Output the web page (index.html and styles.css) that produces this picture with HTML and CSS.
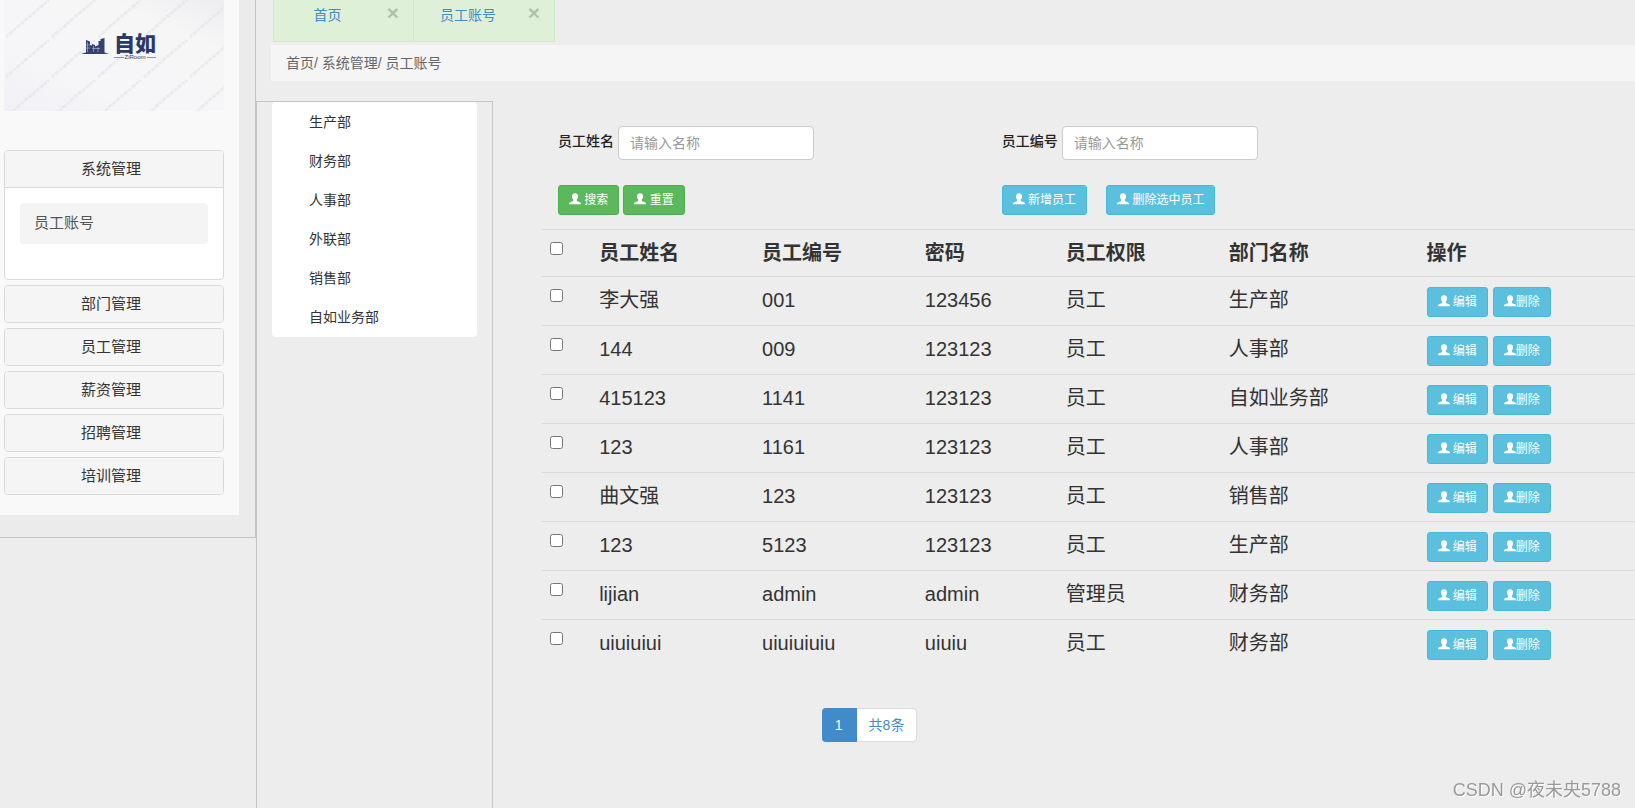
FILE: index.html
```html
<!DOCTYPE html>
<html lang="zh-CN">
<head>
<meta charset="utf-8">
<meta name="viewport" content="width=device-width, initial-scale=1">
<title>员工账号</title>
<link rel="stylesheet" href="styles.css">
</head>
<body>
<svg width="0" height="0" class="sprite" aria-hidden="true">
  <symbol id="user" viewBox="0 0 12 12"><path fill="currentColor" d="M6 .3c2 0 3 1.200 3 3.100 0 1.300-.5 2.400-1.200 3v1c.1.600.4.800 1 1l2.100.9c.8.4 1.100.9 1.100 2H0c0-1.100.3-1.600 1.100-2l2.100-.9c.6-.200.9-.400 1-1v-1C3.500 5.800 3 4.700 3 3.400 3 1.500 4 .3 6 .3Z"/></symbol>
</svg>
<div class="layout">
  <aside class="sidebar">
    <div class="side-panel">
      <div class="brand">
        <svg class="brand-bg" aria-hidden="true">
          <defs><pattern id="hatch" width="46" height="40" patternUnits="userSpaceOnUse">
            <path d="M2 37 26 16M25 17 45 0" stroke="#e2e2e5" stroke-width="3" stroke-dasharray="3 1 5 1" opacity=".55"/>
          </pattern></defs>
          <rect width="100%" height="100%" fill="url(#hatch)"/>
        </svg>
        <svg class="skyline" viewBox="0 0 28 18" aria-hidden="true">
          <path fill="#34406f" d="M0 16.500 5 15.500V3l4 1.500V8l2 .5V7l3 1v1.500l3.500-1.500V4h2V2l4-1v14.500l4.500 1-4.500.5H4Z"/>
          <path stroke="#b9bfd6" stroke-width=".6" d="M6.500 5v10M12.500 9v6M17 10v5M5 8h4M5 11h4M11 11.500h8"/>
        </svg>
        <div class="brand-name"><span class="brand-cn">自如</span><span class="brand-en">ZiRoom</span></div>
      </div>
      <nav class="menu">
        <section class="group">
          <button class="group-head" type="button">系统管理</button>
          <div class="group-body"><a class="group-link" href="#">员工账号</a></div>
        </section>
        <section class="group"><button class="group-head" type="button">部门管理</button></section>
        <section class="group"><button class="group-head" type="button">员工管理</button></section>
        <section class="group"><button class="group-head" type="button">薪资管理</button></section>
        <section class="group"><button class="group-head" type="button">招聘管理</button></section>
        <section class="group"><button class="group-head" type="button">培训管理</button></section>
      </nav>
    </div>
  </aside>
  <main class="main">
    <div class="top">
      <div class="tabs">
        <div class="tab"><a href="#">首页</a><button class="close" type="button" aria-label="关闭">×</button></div>
        <div class="tab"><a href="#">员工账号</a><button class="close" type="button" aria-label="关闭">×</button></div>
      </div>
      <div class="crumbs">首页/ 系统管理/ 员工账号</div>
    </div>
    <div class="work">
      <div class="tree">
        <ul class="tree-list">
          <li>生产部</li><li>财务部</li><li>人事部</li><li>外联部</li><li>销售部</li><li>自如业务部</li>
        </ul>
      </div>
      <div class="content">
        <form class="search">
          <div class="field"><label for="name">员工姓名</label><input id="name" type="text" placeholder="请输入名称"></div>
          <div class="field"><label for="code">员工编号</label><input id="code" type="text" placeholder="请输入名称"></div>
          <div class="actions">
            <button class="btn green" type="button"><svg class="icon"><use href="#user"/></svg> 搜索</button>
            <button class="btn green" type="reset"><svg class="icon"><use href="#user"/></svg> 重置</button>
          </div>
          <div class="actions wide">
            <button class="btn" type="button"><svg class="icon"><use href="#user"/></svg> 新增员工</button>
            <button class="btn" type="button"><svg class="icon"><use href="#user"/></svg> 删除选中员工</button>
          </div>
        </form>
        <table class="staff">
          <colgroup><col class="c-check"><col class="c-text"><col class="c-text"><col class="c-pass"><col class="c-text"><col class="c-dept"><col></colgroup>
          <thead>
            <tr><th><input type="checkbox" aria-label="全选"></th><th>员工姓名</th><th>员工编号</th><th>密码</th><th>员工权限</th><th>部门名称</th><th>操作</th></tr>
          </thead>
          <tbody id="rows"></tbody>
        </table>
        <nav class="pages"><a class="page current" href="#">1</a><a class="page" href="#">共8条</a></nav>
      </div>
    </div>
  </main>
</div>
<div class="watermark">CSDN @夜未央5788</div>
<script src="app.js"></script>
</body>
</html>
```

FILE: app.js
```js
const staff = [
  ["李大强", "001", "123456", "员工", "生产部"],
  ["144", "009", "123123", "员工", "人事部"],
  ["415123", "1141", "123123", "员工", "自如业务部"],
  ["123", "1161", "123123", "员工", "人事部"],
  ["曲文强", "123", "123123", "员工", "销售部"],
  ["123", "5123", "123123", "员工", "生产部"],
  ["lijian", "admin", "admin", "管理员", "财务部"],
  ["uiuiuiui", "uiuiuiuiu", "uiuiu", "员工", "财务部"]
];
const icon = '<svg class="icon"><use href="#user"/></svg>';
document.getElementById("rows").innerHTML = staff.map(row =>
  `<tr><td><input type="checkbox" aria-label="选择 ${row[0]}"></td>` +
  row.map(cell => `<td>${cell}</td>`).join("") +
  `<td><div class="row-actions"><button class="btn" type="button">${icon} 编辑</button><button class="btn" type="button">${icon}删除</button></div></td></tr>`
).join("");
```

FILE: styles.css
```css
* { box-sizing: border-box; }

body {
  margin: 0;
  background: #ededed;
  color: #333;
  font: 14px/20px "Liberation Sans", "Noto Sans CJK SC", sans-serif;
}

button, input { font-family: inherit; }
a { color: #428bca; text-decoration: none; }
.sprite { position: absolute; }

.layout {
  display: flex;
  align-items: flex-start;
  min-height: 100vh;
}

/* Sidebar */
.sidebar {
  flex: 0 0 256px;
  padding: 0 16px 22px 0;
  border: solid #c4c4c4;
  border-width: 0 1px 1px 0;
  background: #ebebeb;
}

.side-panel {
  padding: 0 15px 20px 4px;
  background: #f9f9f9;
}

.brand {
  position: relative;
  display: flex;
  justify-content: center;
  align-items: flex-start;
  gap: 5px;
  height: 111px;
  padding: 33px 0 0 9px;
  background: linear-gradient(25deg, #f0f0f6, #f6f6f8 30%, #f6f6f7 75%, #ededf0);
}

.brand-bg {
  position: absolute;
  inset: 0;
  width: 100%;
  height: 100%;
}

.skyline {
  position: relative;
  width: 28px;
  height: 18px;
  margin-top: 4px;
}

.brand-name {
  position: relative;
  display: flex;
  flex-direction: column;
  color: #2c3868;
}

.brand-cn {
  font-size: 21px;
  font-weight: 900;
  line-height: 21px;
}

.brand-en {
  display: flex;
  align-items: center;
  gap: 1px;
  font-size: 6px;
  line-height: 6px;
}

.brand-en::before, .brand-en::after {
  content: "";
  flex: 1;
  height: 1px;
  background: #8d93ab;
}

.menu {
  display: flex;
  flex-direction: column;
  gap: 5px;
  margin-top: 39px;
}

.group {
  border: 1px solid #d9d9d9;
  border-radius: 4px;
  background: #fff;
  overflow: hidden;
}

.group-head {
  display: block;
  width: 100%;
  height: 36px;
  padding: 0 6px 4px 0;
  border: 0;
  background: #f5f5f5;
  color: #333;
  font-size: 15px;
}

.group-body {
  padding: 15px 15px 35px;
  border-top: 1px solid #d9d9d9;
}

.group-link {
  display: block;
  padding: 10px 14px 11px;
  border-radius: 4px;
  background: #f4f4f4;
  color: #555;
  font-size: 15px;
}

/* Tabs and breadcrumb */
.main {
  flex: 1;
  min-width: 0;
  min-height: 100vh;
  display: flex;
  flex-direction: column;
}

.top { padding-left: 15px; }

.tabs {
  display: flex;
  padding-left: 2px;
}

.tab {
  display: flex;
  align-items: flex-start;
  width: 141px;
  height: 42px;
  padding: 4px 12px 0 0;
  border: 1px solid #d0e9c6;
  border-top: 0;
  background: #dff0d8;
}

.tab + .tab { border-left: 0; }

.tab a {
  flex: 1;
  padding: 1px 4px 0 0;
  text-align: center;
}

.close {
  width: 16px;
  padding: 0;
  border: 0;
  background: none;
  color: #000;
  font-size: 21px;
  font-weight: bold;
  line-height: 18px;
  opacity: .2;
}

.crumbs {
  margin-top: 3px;
  padding: 8px 15px;
  background: #f5f5f5;
  color: #666;
}

/* Department tree */
.work {
  flex: 1;
  display: flex;
  margin-top: 20px;
}

.tree {
  flex: 0 0 237px;
  padding: 0 15px;
  border: solid #c4c4c4;
  border-width: 1px 1px 0;
}

.tree-list {
  margin: 0;
  padding: 0 0 1px;
  border-radius: 4px;
  background: #fff;
  list-style: none;
}

.tree-list li {
  padding: 10px 0 9px 37px;
}

/* Search form */
.content {
  flex: 1;
  min-width: 0;
  padding: 25px 0 0 49px;
}

.search {
  display: grid;
  grid-template-columns: 41.2% 1fr;
  row-gap: 25px;
  padding-left: 16px;
}

.field {
  display: flex;
  gap: 4px;
}

.field label {
  color: #222;
  font-weight: 500;
  line-height: 30px;
}

.field input {
  width: 196px;
  height: 34px;
  padding: 0 11px;
  border: 1px solid #ccc;
  border-radius: 4px;
  background: #fff;
  font-size: 14px;
}

.field input::placeholder { color: #999; }

.actions {
  display: flex;
  gap: 4px;
}

.wide { gap: 19px; }

.btn {
  height: 30px;
  padding: 0 10px;
  border: 1px solid #46b8da;
  border-radius: 3px;
  background: #5bc0de;
  color: #fff;
  font-size: 12px;
  line-height: 18px;
  white-space: nowrap;
}

.green {
  border-color: #4cae4c;
  background: #5cb85c;
}

.icon {
  width: 12px;
  height: 12px;
  vertical-align: -1px;
}

/* Staff table */
.staff {
  width: 100%;
  margin-top: 14px;
  border-collapse: collapse;
  table-layout: fixed;
  font-size: 20px;
  line-height: 30px;
}

.c-check { width: 4.5%; }
.c-text { width: 14.9%; }
.c-pass { width: 12.9%; }
.c-dept { width: 18.1%; }

.staff th, .staff td {
  padding: 8px;
  border-top: 1px solid #d9d9d9;
  text-align: left;
  vertical-align: top;
}

.staff td { height: 49px; }

.staff input {
  display: block;
  width: 13px;
  height: 13px;
  margin: 4px 0 0;
}

.row-actions {
  display: flex;
  gap: 5px;
  padding-top: 2px;
}

/* Pagination */
.pages {
  display: flex;
  margin-top: 39px;
  padding-left: 25.6%;
}

.page {
  padding: 6px 12px;
  border: 1px solid #ddd;
  border-left: 0;
  border-radius: 0 4px 4px 0;
  background: #fff;
}

.current {
  padding: 6px 13px;
  border-color: #428bca;
  border-radius: 4px 0 0 4px;
  background: #428bca;
  color: #fff;
}

.watermark {
  position: fixed;
  right: 14px;
  bottom: 5px;
  color: #999;
  font-size: 18px;
  line-height: 26px;
  text-shadow: 1px 1px 0 #fff;
}
```
